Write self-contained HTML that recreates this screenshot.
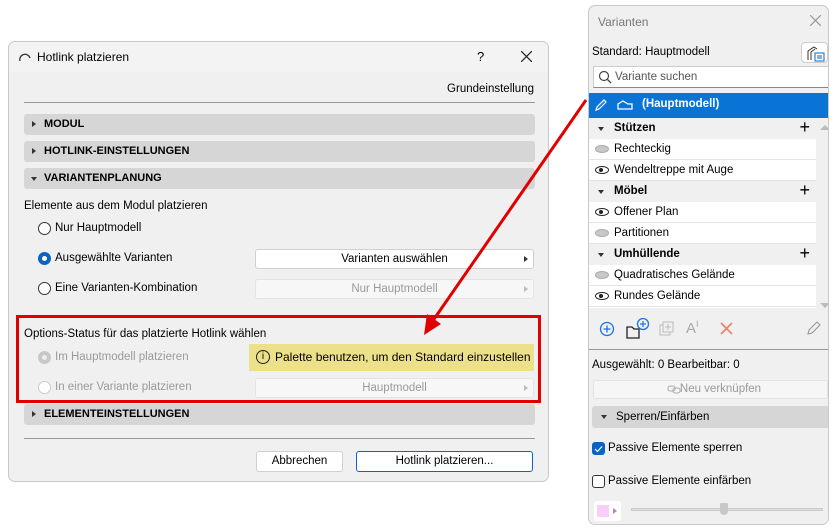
<!DOCTYPE html>
<html><head><style>
*{box-sizing:border-box;margin:0;padding:0}
body{width:838px;height:530px;background:#fff;font-family:"Liberation Sans",sans-serif;font-size:11.5px;color:#000;position:relative;overflow:hidden}
.a{position:absolute;white-space:nowrap}
.dlg{left:8px;top:41px;width:541px;height:441px;background:#f0f0f0;border:1px solid #c8c8c8;border-radius:7px;overflow:hidden}
.bar{position:absolute;left:15px;width:511px;height:21px;background:#d6d6d6;border-radius:3px;font-weight:bold;font-size:11px;line-height:21px;padding-left:20px}
.tri{position:absolute;left:8px;top:7px;width:0;height:0;border-left:4px solid #333;border-top:3.5px solid transparent;border-bottom:3.5px solid transparent}
.tdn{position:absolute;left:7px;top:9px;width:0;height:0;border-top:4px solid #333;border-left:3.5px solid transparent;border-right:3.5px solid transparent}
.rad{position:absolute;width:13px;height:13px;border:1px solid #333;border-radius:50%;background:#fff}
.btn{position:absolute;background:#fff;border:1px solid #d0d0d0;border-radius:3px;text-align:center;font-size:11.5px}
.dis{color:#9a9a9a}
.pn{left:588px;top:5px;width:241px;height:520px;background:#f0f0f0;border:1px solid #c8c8c8;border-radius:7px;overflow:hidden}
.row{position:absolute;left:0;width:227px;height:21px;background:#fff;border-bottom:1px solid #e4e4e4;line-height:20px;padding-left:25px}
.grp{background:#f0f0f0;font-weight:bold;border:none}
.eye{position:absolute;left:6px;top:6px;width:14px;height:8px;border-radius:50%;background:#c8c8c8;border:1px solid #aaa}
.eyeo{background:#fff;border:1.5px solid #222}
.eyeo:after{content:"";position:absolute;left:3px;top:0.5px;width:4px;height:4px;border-radius:50%;background:#222}
.plus{position:absolute;right:6px;top:0;font-size:18px;font-weight:normal;line-height:19px}
</style></head><body>

<div class="a dlg">
  <div class="a" style="left:0;top:0;width:541px;height:30px;background:#f3f3f3"></div>
  <svg class="a" style="left:10px;top:10px" width="12" height="10"><path d="M1 9 A5 5 0 0 1 11 6" stroke="#333" fill="none" stroke-width="1.3"/></svg>
  <div class="a" style="left:28px;top:8px;font-size:12px">Hotlink platzieren</div>
  <div class="a" style="left:468px;top:7px;font-size:13px">?</div>
  <svg class="a" style="left:512px;top:9px" width="11" height="11"><path d="M0 0L11 11M11 0L0 11" stroke="#222" stroke-width="1.2"/></svg>
  <div class="a" style="right:14px;top:41px">Grundeinstellung</div>
  <div class="a" style="left:15px;top:60px;width:511px;height:1px;background:#999"></div>
  <div class="bar" style="top:72px"><span class="tri"></span>MODUL</div>
  <div class="bar" style="top:99px"><span class="tri"></span>HOTLINK-EINSTELLUNGEN</div>
  <div class="bar" style="top:126px"><span class="tdn"></span>VARIANTENPLANUNG</div>
  <div class="a" style="left:15px;top:158px">Elemente aus dem Modul platzieren</div>
  <div class="rad" style="left:29px;top:180px"></div><div class="a" style="left:46px;top:180px">Nur Hauptmodell</div>
  <div class="rad" style="left:29px;top:210px;border:4px solid #0a64c8"></div><div class="a" style="left:46px;top:210px">Ausgewählte Varianten</div>
  <div class="btn" style="left:246px;top:207px;width:279px;height:20px;line-height:18px">Varianten auswählen<span class="a" style="right:5px;top:6px;border-left:4px solid #333;border-top:3.5px solid transparent;border-bottom:3.5px solid transparent"></span></div>
  <div class="rad" style="left:29px;top:240px"></div><div class="a" style="left:46px;top:240px">Eine Varianten-Kombination</div>
  <div class="btn dis" style="left:246px;top:237px;width:279px;height:20px;line-height:18px;border-color:#e4e4e4;background:#f7f7f7">Nur Hauptmodell<span class="a" style="right:5px;top:6px;border-left:4px solid #bbb;border-top:3.5px solid transparent;border-bottom:3.5px solid transparent"></span></div>
  <div class="a" style="left:15px;top:286px">Options-Status für das platzierte Hotlink wählen</div>
  <div class="rad" style="left:29px;top:309px;border:4px solid #c8c8c8;background:#eee"></div><div class="a dis" style="left:46px;top:309px">Im Hauptmodell platzieren</div>
  <div class="a" style="left:240px;top:302px;width:285px;height:27px;background:#ede08a"></div>
  <div class="a" style="left:247px;top:308px;width:14px;height:14px;border:1.2px solid #222;border-radius:50%;font-size:10px;text-align:center;line-height:12px">i</div>
  <div class="a" style="left:266px;top:308px;font-size:12px">Palette benutzen, um den Standard einzustellen</div>
  <div class="rad" style="left:29px;top:339px;border-color:#ccc"></div><div class="a dis" style="left:46px;top:339px">In einer Variante platzieren</div>
  <div class="btn dis" style="left:246px;top:336px;width:279px;height:20px;line-height:18px;border-color:#e4e4e4;background:#f7f7f7">Hauptmodell<span class="a" style="right:5px;top:6px;border-left:4px solid #bbb;border-top:3.5px solid transparent;border-bottom:3.5px solid transparent"></span></div>
  <div class="bar" style="top:362px"><span class="tri"></span>ELEMENTEINSTELLUNGEN</div>
  <div class="a" style="left:15px;top:396px;width:511px;height:1px;background:#999"></div>
  <div class="btn" style="left:247px;top:409px;width:87px;height:21px;line-height:19px">Abbrechen</div>
  <div class="btn" style="left:347px;top:409px;width:177px;height:21px;line-height:19px;border-color:#0a64c8">Hotlink platzieren...</div>
</div>
<div class="a" style="left:16px;top:315px;width:525px;height:88px;border:3px solid #e00000"></div>

<div class="a pn">
  <div class="a" style="left:9px;top:9px;color:#777;font-size:12px">Varianten</div>
  <svg class="a" style="left:221px;top:9px" width="11" height="11"><path d="M0 0L11 11M11 0L0 11" stroke="#999" stroke-width="1.2"/></svg>
  <div class="a" style="left:0;top:30px;width:241px;height:490px;background:#f0f0f0"></div>
  <div class="a" style="left:3px;top:40px">Standard: Hauptmodell</div>
  <div class="a" style="left:212px;top:36px;width:27px;height:21px;background:#fff;border:1px solid #ccc;border-radius:4px"></div>
  <svg class="a" style="left:217px;top:39px" width="20" height="17"><path d="M2 15V6L8 2L11 4" stroke="#333" fill="none"/><path d="M5 15V7L9 4" stroke="#333" fill="none"/><rect x="9" y="8" width="9" height="8" fill="#fff" stroke="#0a64c8"/><path d="M11 11h5M11 13h5" stroke="#0a64c8"/></svg>
  <div class="a" style="left:4px;top:60px;width:236px;height:22px;background:#fff;border:1px solid #ccc;border-bottom-color:#888"></div>
  <svg class="a" style="left:9px;top:64px" width="14" height="14"><circle cx="6" cy="6" r="4.5" stroke="#444" fill="none" stroke-width="1.2"/><path d="M9.5 9.5L13 13" stroke="#444" stroke-width="1.3"/></svg>
  <div class="a" style="left:26px;top:65px;color:#555">Variante suchen</div>
  <div class="a" style="left:0;top:87px;width:241px;height:25px;background:#0a74d6"></div>
  <svg class="a" style="left:5px;top:92px" width="14" height="14"><path d="M2 12L3 9L10 2L12 4L5 11Z" stroke="#fff" fill="none" stroke-width="1.2"/></svg>
  <svg class="a" style="left:28px;top:93px" width="16" height="11"><path d="M1 10V5L6 2L11 5H15V10Z" stroke="#fff" fill="none" stroke-width="1.3"/></svg>
  <div class="a" style="left:53px;top:92px;color:#fff;font-weight:bold">(Hauptmodell)</div>
  <div class="a" style="left:0;top:112px;width:227px;height:190px;background:#fff"></div>
  <div class="row grp" style="top:112px"><span class="tdn" style="left:9px"></span>Stützen<span class="plus">+</span></div>
  <div class="row" style="top:133px"><span class="eye"></span>Rechteckig</div>
  <div class="row" style="top:154px"><span class="eye eyeo"></span>Wendeltreppe mit Auge</div>
  <div class="row grp" style="top:175px"><span class="tdn" style="left:9px"></span>Möbel<span class="plus">+</span></div>
  <div class="row" style="top:196px"><span class="eye eyeo"></span>Offener Plan</div>
  <div class="row" style="top:217px"><span class="eye"></span>Partitionen</div>
  <div class="row grp" style="top:238px"><span class="tdn" style="left:9px"></span>Umhüllende<span class="plus">+</span></div>
  <div class="row" style="top:259px"><span class="eye"></span>Quadratisches Gelände</div>
  <div class="row" style="top:280px"><span class="eye eyeo"></span>Rundes Gelände</div>
  <div class="a" style="left:231px;top:119px;border-bottom:5px solid #bbb;border-left:5px solid transparent;border-right:5px solid transparent"></div>
  <div class="a" style="left:231px;top:297px;border-top:5px solid #bbb;border-left:5px solid transparent;border-right:5px solid transparent"></div>
  <svg class="a" style="left:10px;top:315px" width="16" height="16"><circle cx="8" cy="8" r="6.5" stroke="#1a73e8" fill="none" stroke-width="1.3"/><path d="M8 4.5v7M4.5 8h7" stroke="#1a73e8" stroke-width="1.3"/></svg>
  <svg class="a" style="left:37px;top:311px" width="24" height="22"><path d="M1 21V10H6L8 12H13V21Z" stroke="#222" fill="none" stroke-width="1.3"/><circle cx="17" cy="7" r="5.5" stroke="#1a73e8" fill="#f0f0f0" stroke-width="1.3"/><path d="M17 4v6M14 7h6" stroke="#1a73e8" stroke-width="1.2"/></svg>
  <svg class="a" style="left:70px;top:315px" width="15" height="15"><rect x="1" y="4" width="10" height="10" stroke="#bbb" fill="none"/><rect x="4" y="1" width="10" height="10" stroke="#bbb" fill="#f0f0f0"/><path d="M9 3v6M6 6h6" stroke="#bbb"/></svg>
  <div class="a" style="left:97px;top:313px;color:#aaa;font-size:15px">A<sup style="font-size:9px">I</sup></div>
  <svg class="a" style="left:131px;top:316px" width="13" height="13"><path d="M1 1L12 12M12 1L1 12" stroke="#f08070" stroke-width="1.8"/></svg>
  <svg class="a" style="left:217px;top:314px" width="16" height="16"><path d="M2 14L3 10L11 2L14 5L6 13Z" stroke="#999" fill="none" stroke-width="1.1"/></svg>
  <div class="a" style="left:0;top:343px;width:241px;height:1px;background:#999"></div>
  <div class="a" style="left:3px;top:353px">Ausgewählt: 0 Bearbeitbar: 0</div>
  <div class="a" style="left:4px;top:374px;width:235px;height:19px;background:#f6f6f6;border:1px solid #e2e2e2;border-radius:3px;color:#999;text-align:center;line-height:17px;padding-left:20px">Neu verknüpfen</div>
  <svg class="a" style="left:78px;top:379px" width="14" height="9"><rect x="1" y="1" width="7" height="5" rx="2" stroke="#aaa" fill="none"/><rect x="6" y="3" width="7" height="5" rx="2" stroke="#aaa" fill="none"/></svg>
  <div class="a" style="left:3px;top:400px;width:237px;height:22px;background:#d6d6d6;border-radius:3px;line-height:22px;padding-left:24px">Sperren/Einfärben<span class="tdn" style="left:9px"></span></div>
  <div class="a" style="left:3px;top:436px;width:13px;height:13px;background:#0a64c8;border-radius:3px"></div>
  <svg class="a" style="left:5px;top:439px" width="9" height="8"><path d="M1 4L3.5 6.5L8 1.5" stroke="#fff" fill="none" stroke-width="1.2"/></svg>
  <div class="a" style="left:19px;top:436px">Passive Elemente sperren</div>
  <div class="a" style="left:3px;top:469px;width:13px;height:13px;border:1px solid #333;border-radius:3px;background:#fff"></div>
  <div class="a" style="left:19px;top:469px">Passive Elemente einfärben</div>
  <div class="a" style="left:5px;top:495px;width:27px;height:20px;background:#fff;border-radius:3px"></div>
  <div class="a" style="left:8px;top:499px;width:12px;height:12px;background:#fbcdfb"></div>
  <div class="a" style="left:24px;top:502px;border-left:4px solid #999;border-top:3.5px solid transparent;border-bottom:3.5px solid transparent"></div>
  <div class="a" style="left:42px;top:502px;width:192px;height:3px;background:#ddd;border:1px solid #ccc"></div>
  <div class="a" style="left:131px;top:497px;width:8px;height:12px;background:#c8c8c8;border-radius:1px 1px 4px 4px"></div>
</div>

<svg class="a" style="left:0;top:0" width="838" height="530"><path d="M586 100L432 322" stroke="#e00000" stroke-width="3"/><path d="M424 335L427 314L441 324Z" fill="#e00000"/></svg>
</body></html>
